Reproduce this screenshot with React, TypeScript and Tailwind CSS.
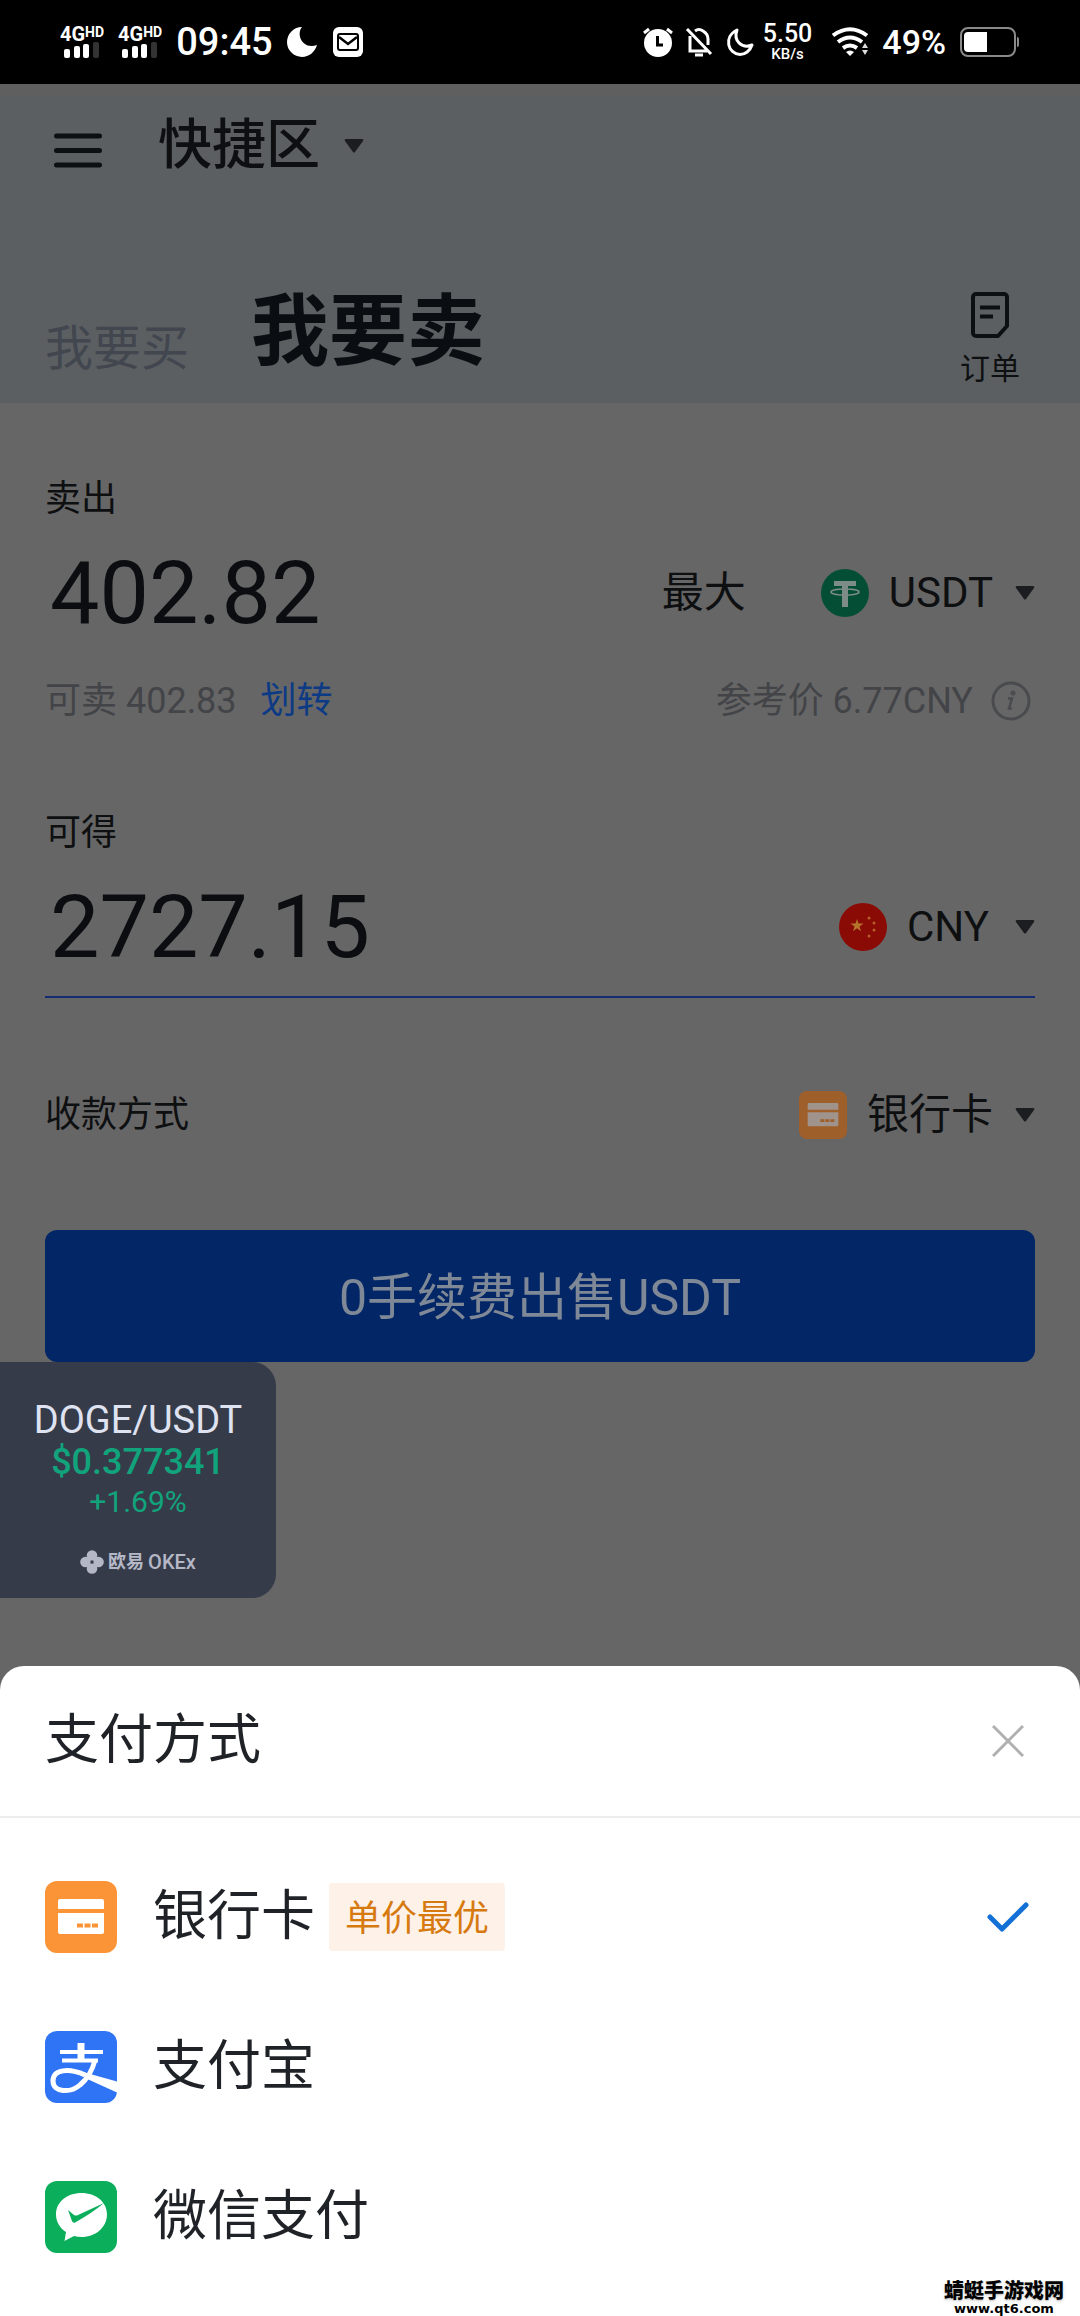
import { useState } from 'react';
import type { ReactNode } from 'react';

type Method = { id: string; name: string; icon: ReactNode; badge?: string };

const methods: Method[] = [
    { id: 'bank', name: '银行卡', icon: <BankIcon className="size-[72px]" />, badge: '单价最优' },
    { id: 'alipay', name: '支付宝', icon: <AlipayIcon /> },
    { id: 'wechat', name: '微信支付', icon: <WechatPayIcon /> },
];

export default function App() {
    const [method, setMethod] = useState('bank');

    return (
        <div className="relative flex min-h-screen flex-col bg-[#666666] font-['Roboto','Noto_Sans_CJK_SC',sans-serif] text-[#0e0f11]">
            <StatusBar />
            <div className="h-3 bg-[#5f5f5f]" />

            {/* Header */}
            <header className="bg-[#5b5f62] pt-[14px]">
                <div className="flex items-end pl-[54px]">
                    <button aria-label="菜单">
                        <svg viewBox="0 0 48 56" className="h-14 w-12" stroke="#0c1013" strokeWidth="5" strokeLinecap="round">
                            <path d="M2.500 10h43M2.500 24.500h43M2.500 39h43" />
                        </svg>
                    </button>
                    <div className="ml-14 flex items-center gap-6">
                        <select aria-label="交易区" className="field-sizing-content appearance-none text-[54px] leading-[72px] font-medium">
                            <option>快捷区</option>
                        </select>
                        <Caret />
                    </div>
                </div>
                <div className="mt-[109px] flex items-end justify-between pr-[60px] pl-[45px]">
                    <nav className="flex items-end gap-[62px] pb-[30px]">
                        <button className="text-[48px] leading-[48px] text-[#42464f]">我要买</button>
                        <button className="text-[78px] leading-[80px] font-bold text-[#0a0d11]">我要卖</button>
                    </nav>
                    <button className="flex flex-col items-center gap-3 pb-4 text-[30px] leading-9">
                        <svg viewBox="0 0 40 48" className="h-12 w-10" fill="none" stroke="#0c1013" strokeWidth="4">
                            <path d="M6 3h28a3 3 0 0 1 3 3v29l-9 10H6a3 3 0 0 1-3-3V6a3 3 0 0 1 3-3z" strokeLinejoin="round" />
                            <path d="M10 16.500h20M10 25.500h13" />
                        </svg>
                        订单
                    </button>
                </div>
            </header>

            {/* Form */}
            <main className="px-[45px] pt-[72px]">
                <label htmlFor="sell" className="block text-[36px] leading-[48px]">卖出</label>
                <div className="mt-[22px] flex items-center">
                    <AmountInput id="sell" value="402.82" />
                    <button className="mr-[75px] text-[42px] leading-[48px]">最大</button>
                    <PickerField label="币种" value="USDT" icon={<TetherIcon />} />
                </div>
                <div className="mt-9 flex items-center justify-between text-[36px] leading-[48px] text-[#434448]">
                    <p>
                        可卖 402.83
                        <a href="#transfer" className="ml-6 text-[#0d3a85]">划转</a>
                    </p>
                    <p className="flex items-center gap-[18px]">
                        参考价 6.77CNY
                        <button aria-label="参考价说明" className="mr-1">
                            <svg viewBox="0 0 40 40" className="size-10" fill="none" stroke="#4a4b4e" strokeWidth="3">
                                <circle cx="20" cy="20" r="18" />
                                <path d="M17 17.500h4l-3 10h3" strokeWidth="2.500" />
                                <circle cx="22" cy="12" r="1" />
                            </svg>
                        </button>
                    </p>
                </div>

                <label htmlFor="receive" className="mt-[84px] block text-[36px] leading-[48px]">可得</label>
                <div className="mt-[22px] flex items-center border-b-2 border-[#152c70] pb-[21px]">
                    <AmountInput id="receive" value="2727.15" />
                    <PickerField label="法币" value="CNY" icon={<ChinaFlagIcon />} />
                </div>

                <div className="mt-[93px] flex h-12 items-center justify-between">
                    <span className="text-[36px] leading-[48px]">收款方式</span>
                    <PickerField label="收款方式" value="银行卡" icon={<BankIcon dimmed className="size-12" />} />
                </div>

                <button className="mt-[91px] h-[132px] w-full rounded-xl bg-[#032766] pt-1 text-[50px] text-[#7f8896]">
                    0手续费出售USDT
                </button>
            </main>

            {/* Price ticker */}
            <aside className="flex w-[276px] flex-col items-center rounded-r-3xl bg-[#363b4a] pt-9 pb-6">
                <p className="text-[38px] leading-[44px] text-[#dfe2f0]">DOGE/USDT</p>
                <p className="text-[36px] leading-10 font-medium text-[#11a47c]">$0.377341</p>
                <p className="text-[30px] leading-10 text-[#11a47c]">+1.69%</p>
                <p className="mt-7 flex items-center gap-1 text-[20px] leading-6 font-medium text-[#b4b8c6]">
                    <svg viewBox="0 0 24 24" className="size-6" fill="#b4b8c6">
                        <circle cx="12" cy="5.500" r="5.300" />
                        <circle cx="5.500" cy="12" r="5.300" />
                        <circle cx="18.500" cy="12" r="5.300" />
                        <circle cx="12" cy="18.500" r="5.300" />
                        <circle cx="12" cy="12" r="1.500" fill="#363b4a" />
                    </svg>
                    <span className="text-[18px] font-bold">欧易</span>
                    OKEx
                </p>
            </aside>

            {/* Payment sheet */}
            <section className="mt-auto rounded-t-3xl bg-white pb-6 text-[#1f2226]">
                <div className="flex h-[152px] items-center justify-between border-b-2 border-[#ededed] pr-14 pl-[45px]">
                    <h2 className="text-[54px] leading-[72px]">支付方式</h2>
                    <button aria-label="关闭">
                        <svg viewBox="0 0 32 32" className="size-8" stroke="#b0b0b0" strokeWidth="3">
                            <path d="M1 1l30 30M31 1L1 31" />
                        </svg>
                    </button>
                </div>
                <div className="pt-6">
                    {methods.map((m) => (
                        <label key={m.id} className="relative flex h-[150px] items-center pr-[50px] pl-[45px]">
                            <input
                                type="radio"
                                name="method"
                                className="sr-only"
                                checked={method === m.id}
                                onChange={() => setMethod(m.id)}
                            />
                            {m.icon}
                            <span className="ml-9 text-[54px] leading-[72px]">{m.name}</span>
                            {m.badge && (
                                <span className="ml-[14px] rounded-sm bg-[#fdf1e8] px-4 pt-3 pb-2 text-[36px] leading-[48px] text-[#d67a10]">
                                    {m.badge}
                                </span>
                            )}
                            {method === m.id && (
                                <svg viewBox="0 0 44 32" className="ml-auto h-8 w-11" fill="none" stroke="#1270d6" strokeWidth="5" strokeLinecap="round" strokeLinejoin="round">
                                    <path d="M4 16l12 12L40 4" />
                                </svg>
                            )}
                        </label>
                    ))}
                </div>
            </section>

            <Watermark />
        </div>
    );
}

function StatusBar() {
    return (
        <div className="flex h-[84px] items-center justify-between bg-black px-[60px] text-white">
            <div className="flex items-center">
                <Signal />
                <Signal />
                <span className="text-[38px] leading-[48px] font-medium">09:45</span>
                <svg viewBox="0 0 30 30" className="ml-[14px] size-[30px]" fill="#fff">
                    <path d="M15 0C9 7 15 23 30 18C28 25 22 30 15 30A15 15 0 0 1 15 0z" />
                </svg>
                <svg viewBox="0 0 30 30" className="ml-4 size-[30px]" fill="none">
                    <rect width="30" height="30" rx="6" fill="#fff" />
                    <rect x="5" y="7" width="20" height="16" rx="2" stroke="#000" strokeWidth="2" />
                    <path d="M6 10l9 7 9-7" stroke="#000" strokeWidth="2.500" />
                </svg>
            </div>
            <div className="flex items-center">
                <svg viewBox="0 0 30 30" className="size-[30px]" fill="none">
                    <circle cx="15" cy="16" r="14" fill="#fff" />
                    <path d="M1 6l5-4M29 6l-5-4" stroke="#fff" strokeWidth="3" />
                    <path d="M14.500 9v9H20" stroke="#000" strokeWidth="3" />
                </svg>
                <svg viewBox="0 0 28 30" className="ml-3 h-[30px] w-7" fill="none" stroke="#fff" strokeWidth="3">
                    <path d="M2 2l24 25M5 9v15h17M10 4q4-3 8 0q5 3 5 8v6" />
                    <path d="M10 28h8" />
                </svg>
                <svg viewBox="0 0 30 30" className="ml-3 size-[30px]" fill="none" stroke="#fff" strokeWidth="3" strokeLinejoin="round">
                    <path d="M12 3C8 14 17 22 27 18C25 24 20 27.500 15 27.500C3 27 -2 10 12 3z" />
                </svg>
                <span className="ml-2 flex flex-col items-center font-medium">
                    <span className="text-[25px] leading-6">5.50</span>
                    <span className="text-[15px] leading-4">KB/s</span>
                </span>
                <svg viewBox="0 0 38 30" className="ml-5 h-[30px] w-[38px]" fill="none" stroke="#fff" strokeWidth="4">
                    <path d="M1 8.500Q18 -4 35 8.500M6 15q12-9 24 0M11 21q7-5 14 0" />
                    <path d="M14 25q4-3 8 0l-4 4z" fill="#fff" stroke="none" />
                    <path d="M30 21l3-5 3 5zM30 23l3 5 3-5z" fill="#ddd" stroke="none" />
                </svg>
                <span className="ml-3 text-[34px] leading-[48px] font-medium">49%</span>
                <svg viewBox="0 0 60 30" className="ml-[14px] h-[30px] w-[60px]" fill="none">
                    <rect x="1" y="1" width="54" height="28" rx="7" stroke="#8a8a8a" strokeWidth="2" />
                    <path d="M8 5h19v20H8a4 4 0 0 1-4-4V9a4 4 0 0 1 4-4z" fill="#fff" />
                    <path d="M57 10q2 0 2 2v6q0 2-2 2z" fill="#8a8a8a" />
                </svg>
            </div>
        </div>
    );
}

function Signal() {
    return (
        <div className="mr-[14px] flex flex-col items-center">
            <span className="flex items-start text-[20px] leading-4 font-bold">
                4G<span className="text-[14px] leading-3">HD</span>
            </span>
            <svg viewBox="0 0 36 16" className="h-4 w-9" fill="#fff">
                <rect x="0" y="7" width="6" height="9" rx="2" />
                <rect x="10" y="4" width="6" height="12" rx="2" />
                <rect x="19" y="2" width="6" height="14" rx="2" />
                <rect x="29" y="0" width="6" height="16" rx="2" fill="#333" />
            </svg>
        </div>
    );
}

function Caret() {
    return (
        <svg viewBox="0 0 20 14" className="h-[14px] w-5" fill="#1b1d21">
            <path d="M2 0h16q2 0 1 2l-8 11q-1 1-2 0L1 2Q0 0 2 0z" />
        </svg>
    );
}

function AmountInput({ id, value }: { id: string, value: string }) {
    return (
        <input
            id={id}
            inputMode="decimal"
            defaultValue={value}
            className="h-24 min-w-0 flex-1 pl-[5px] text-[88px] leading-[96px] text-[#0b0d10] outline-none"
        />
    );
}

function PickerField({ label, value, icon }: { label: string, value: string, icon: ReactNode }) {
    return (
        <div className="flex items-center">
            {icon}
            <select aria-label={label} className="ml-5 field-sizing-content min-w-[86px] appearance-none text-[42px] leading-[48px]">
                <option>{value}</option>
            </select>
            <span className="ml-[22px]">
                <Caret />
            </span>
        </div>
    );
}

function TetherIcon() {
    return (
        <svg viewBox="0 0 48 48" className="size-12">
            <circle cx="24" cy="24" r="24" fill="#054e36" />
            <path d="M13 12h22v5h-8v21h-6V17h-8z" fill="#7d8c86" />
            <ellipse cx="24" cy="23" rx="14" ry="3" fill="none" stroke="#7d8c86" strokeWidth="1.500" />
        </svg>
    );
}

function ChinaFlagIcon() {
    return (
        <svg viewBox="0 0 48 48" className="size-12">
            <circle cx="24" cy="24" r="24" fill="#8a0b05" />
            <path d="M18 16l1.500 4.500h5l-4 3 1.500 4.700-4-2.900-4 2.900 1.500-4.700-4-3h5z" fill="#b5762c" />
            <g fill="#b5602a">
                <circle cx="30" cy="15" r="1.500" />
                <circle cx="35" cy="20" r="1.500" />
                <circle cx="35" cy="27" r="1.500" />
                <circle cx="30" cy="33" r="1.500" />
            </g>
        </svg>
    );
}

function BankIcon({ dimmed, className }: { dimmed?: boolean, className: string }) {
    const base = dimmed ? '#9f5f2a' : '#fb9337';
    const card = dimmed ? '#a0938b' : '#ffffff';
    return (
        <svg viewBox="0 0 72 72" className={className}>
            <rect width="72" height="72" rx="12" fill={base} />
            <path d="M15 18h42q2 0 2 2v8H13v-8q0-2 2-2zM13 32h46v19q0 2-2 2H15q-2 0-2-2z" fill={card} />
            <path d="M32 42.500h6v4h-6zM39.500 42.500h6v4h-6zM47 42.500h6v4h-6z" fill={base} />
        </svg>
    );
}

function AlipayIcon() {
    return (
        <svg viewBox="0 0 72 72" className="size-[72px]" fill="none" stroke="#fff">
            <rect width="72" height="72" rx="12" fill="#2f74f5" stroke="none" />
            <path d="M15 21h43M17 29.500h36" strokeWidth="4" />
            <path d="M36 12v18" strokeWidth="7" />
            <path d="M50 29C47 41 41 49 35 54C26 62 8 62 8 50C8 38 24 37 40 44" strokeWidth="5" />
            <path d="M38 41L72 50.500V61.500L40 47z" fill="#fff" stroke="none" />
        </svg>
    );
}

function WechatPayIcon() {
    return (
        <svg viewBox="0 0 72 72" className="size-[72px]">
            <rect width="72" height="72" rx="12" fill="#0bae5b" />
            <path d="M36.500 12C22 12 11 21 11 33.500C11 41 15 47 21 51L19.500 60L29 55Q33 56 36.500 56C51 56 62 46 62 33.500C62 21 51 12 36.500 12z" fill="#fff" />
            <path d="M23 29l6 5q2 1 4 0L59 22Q47 32 31 41q-3 2-4-1z" fill="#0bae5b" />
        </svg>
    );
}

function Watermark() {
    return (
        <div className="absolute right-4 bottom-0 flex flex-col items-center text-black">
            <span className="text-[20px] leading-[22px] font-black text-shadow-md">蜻蜓手游戏网</span>
            <span className="font-['DejaVu_Sans',sans-serif] text-[13px] leading-[14px] font-bold">www.qt6.com</span>
        </div>
    );
}
